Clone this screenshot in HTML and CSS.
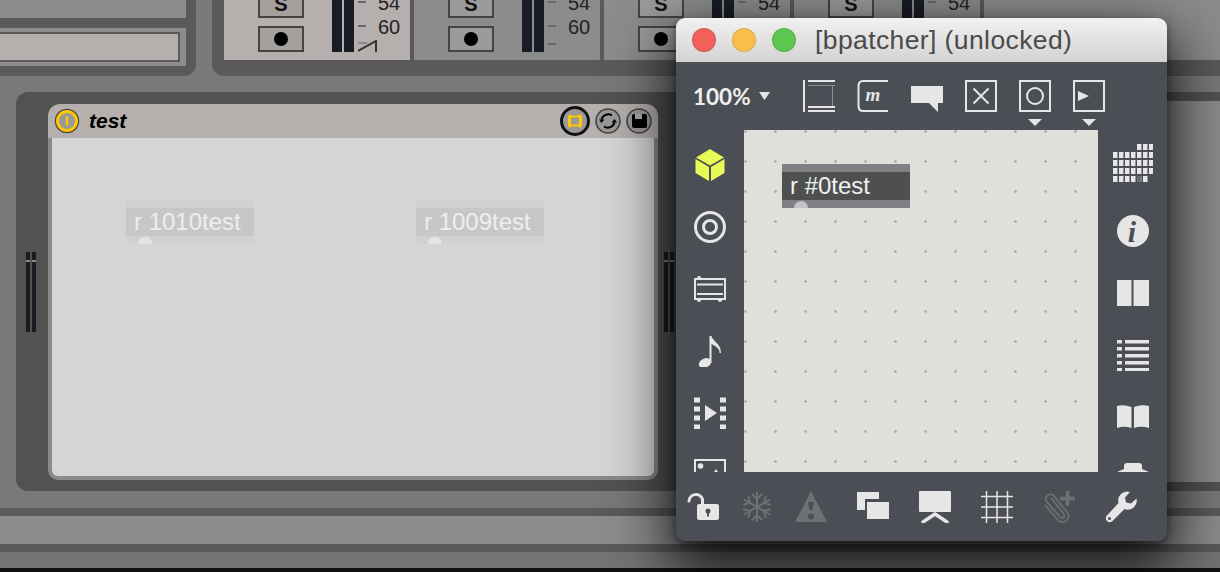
FILE: index.html
```html
<html>
<head>
	<link rel="stylesheet" href="styles.css">
	<title>bpatcher</title>
</head>
<body>
	<div id="toprow">
		<div id="browser">
			<div class="browserband"></div>
			<div class="browserfield"><div class="fieldbox"></div></div>
		</div>
		<div id="mixer">
			<div class="channel selected">
				<div class="buttons">
					<div class="chanbtn solo">S</div>
					<div class="chanbtn"><span class="recdot"></span></div>
				</div>
				<div class="meter"><i></i><i></i></div>
				<div class="scale">
					<div class="scalerow"><b></b><span>54</span></div>
					<div class="scalerow"><b></b><span>60</span></div>
					<div class="scalerow short">
						<svg width="20" height="12" viewBox="0 0 20 12"><path class="rampgrey" d="M0 3H9"/><path class="ramp" d="M0 11L18 1V12"/></svg>
					</div>
				</div>
			</div>
			<div class="channel">
				<div class="buttons">
					<div class="chanbtn solo">S</div>
					<div class="chanbtn"><span class="recdot"></span></div>
				</div>
				<div class="meter"><i></i><i></i></div>
				<div class="scale">
					<div class="scalerow"><b></b><span>54</span></div>
					<div class="scalerow"><b></b><span>60</span></div>
					<div class="scalerow short"><b></b></div>
				</div>
			</div>
			<div class="channel">
				<div class="buttons">
					<div class="chanbtn solo">S</div>
					<div class="chanbtn"><span class="recdot"></span></div>
				</div>
				<div class="meter"><i></i><i></i></div>
				<div class="scale">
					<div class="scalerow"><b></b><span>54</span></div>
					<div class="scalerow"><b></b><span>60</span></div>
					<div class="scalerow short"><b></b></div>
				</div>
			</div>
			<div class="channel">
				<div class="buttons">
					<div class="chanbtn solo">S</div>
					<div class="chanbtn"><span class="recdot"></span></div>
				</div>
				<div class="meter"><i></i><i></i></div>
				<div class="scale">
					<div class="scalerow"><b></b><span>54</span></div>
					<div class="scalerow"><b></b><span>60</span></div>
					<div class="scalerow short"><b></b></div>
				</div>
			</div>
			<div class="channel last"></div>
		</div>
	</div>

	<div id="devicerack">
		<div class="sidemeter"><i></i><i></i></div>
		<div id="device">
			<div id="devicetitle">
				<svg width="26" height="26" viewBox="0 0 26 26">
					<circle cx="13" cy="13" r="12.2" fill="#454545"/>
					<circle cx="13" cy="13" r="9.5" fill="#999" stroke="#ffc800" stroke-width="3"/>
					<rect x="11.8" y="8.5" width="2.4" height="9" fill="#ffc800"/>
				</svg>
				<span id="devicename">test</span>
				<div id="devicebtns">
					<svg width="30" height="30" viewBox="0 0 30 30">
						<circle cx="15" cy="15" r="13.5" fill="#999" stroke="#111" stroke-width="3"/>
						<rect x="9" y="10.500" width="12" height="9" fill="none" stroke="#ffc800" stroke-width="2"/>
						<path d="M10 8.500V21.500M20 8.500V21.500" fill="none" stroke="#ffc800" stroke-width="2"/>
					</svg>
					<svg width="26" height="26" viewBox="0 0 26 26">
						<circle cx="13" cy="13" r="12" fill="#999" stroke="#444" stroke-width="1.6"/>
						<path d="M6.500 11.500A7 7 0 0 1 17 7.500M19.500 14.500A7 7 0 0 1 9 18.500" fill="none" stroke="#000" stroke-width="2"/>
						<path d="M4 11.500H9.500L6.500 15ZM22 14.500H16.500L19.500 11Z" fill="#000"/>
					</svg>
					<svg width="26" height="26" viewBox="0 0 26 26">
						<circle cx="13" cy="13" r="12" fill="#999" stroke="#444" stroke-width="1.6"/>
						<rect x="6" y="6" width="15" height="14" rx="2" fill="#000"/>
						<rect x="9" y="6" width="7" height="5" fill="#aaa"/>
					</svg>
				</div>
			</div>
			<div id="devicebody">
				<div class="robject ghost first">
					<div class="objtext">r 1010test</div>
					<span class="inlet"></span>
				</div>
				<div class="robject ghost second">
					<div class="objtext">r 1009test</div>
					<span class="inlet"></span>
				</div>
			</div>
		</div>
		<div class="sidemeter"><i></i><i></i></div>
		<div id="nextdevice"></div>
	</div>

	<div id="strips">
		<div class="strip dark"></div>
		<div class="strip pale"></div>
		<div class="strip dark"></div>
		<div class="strip mid"></div>
		<div class="strip black"></div>
	</div>

	<div id="bpwindow">
		<div id="bptitle">
			<span class="lamp red"></span>
			<span class="lamp yellow"></span>
			<span class="lamp green"></span>
			<span id="bpname">[bpatcher] (unlocked)</span>
		</div>

		<div id="bptoolbar">
			<span id="zoomlabel">100%</span>
			<svg id="zoomarrow" width="11" height="8" viewBox="0 0 11 8"><path class="ico" d="M0 0H11L5.500 8Z"/></svg>
			<div id="tools">
				<svg width="32" height="32" viewBox="0 0 32 32">
					<path class="ico" d="M0 0H2V32H0ZM5 0H32V2H5ZM5 26H32V28H5ZM5 30H32V32H5Z"/>
					<path class="ico faint" d="M5 5H32V6H5ZM29 6H30V26H29Z"/>
				</svg>
				<svg width="32" height="32" viewBox="0 0 32 32">
					<path class="line" d="M31 1H6Q1.500 1 1.500 6V26Q1.500 31 6 31H31"/>
					<text class="micon" x="16" y="21" text-anchor="middle">m</text>
				</svg>
				<svg width="32" height="32" viewBox="0 0 32 32"><path class="ico" d="M0 6H32V23H27V32L18 23H0Z"/></svg>
				<svg width="32" height="32" viewBox="0 0 32 32">
					<rect class="line" x="1" y="1" width="30" height="30"/>
					<path class="line" d="M8.500 8.500L23.500 23.500M23.500 8.500L8.500 23.500"/>
				</svg>
				<svg width="32" height="46" viewBox="0 0 32 46">
					<rect class="line" x="1" y="1" width="30" height="30"/>
					<circle class="line" cx="16" cy="16" r="8"/>
					<path class="ico" d="M9 39H23L16 46Z"/>
				</svg>
				<svg width="32" height="46" viewBox="0 0 32 46">
					<rect class="line" x="1" y="1" width="30" height="30"/>
					<path class="ico" d="M5 11L16 16L5 21Z"/>
					<path class="ico" d="M9 39H23L16 46Z"/>
				</svg>
			</div>
		</div>

		<div id="bpmiddle">
			<div id="leftpalette" class="palette">
				<svg width="32" height="32" viewBox="0 0 32 32">
					<path class="cube" d="M16 0L30 8.500L16 16.500L2 8.500ZM1.500 10L15 18V32L1.500 24ZM30.500 10L17 18V32L30.500 24Z"/>
				</svg>
				<svg width="32" height="32" viewBox="0 0 32 32">
					<circle class="thick" cx="16" cy="16" r="14.500"/>
					<circle class="thick" cx="16" cy="16" r="6.500"/>
				</svg>
				<svg width="32" height="32" viewBox="0 0 32 32">
					<rect class="line" x="1" y="6" width="30" height="20"/>
					<path class="line" d="M3 11.500H29M3 21H29"/>
					<circle class="ico" cx="5" cy="5" r="2"/><circle class="ico" cx="5" cy="27" r="2"/><circle class="ico" cx="26" cy="27" r="2"/>
				</svg>
				<svg width="32" height="32" viewBox="0 0 32 32">
					<ellipse class="ico" cx="11" cy="28" rx="6.500" ry="4.500" transform="rotate(-25 11 28)"/>
					<path class="ico" d="M15.500 1H17.500C18 6 27 8 27 18L25.500 18C26 13 21 11 17.500 9V28H15.500Z"/>
				</svg>
				<svg width="32" height="32" viewBox="0 0 32 32">
					<path class="ico" d="M0 .5H6V5.500H0ZM0 9.500H6V14.500H0ZM0 18.500H6V23.500H0ZM0 27.500H6V32.500H0ZM26 .5H32V5.500H26ZM26 9.500H32V14.500H26ZM26 18.500H32V23.500H26ZM26 27.500H32V32.500H26ZM11 8L23 16L11 24Z"/>
				</svg>
				<svg width="32" height="32" viewBox="0 0 32 32">
					<rect class="line" x="1" y="1" width="30" height="30"/>
					<circle class="ico" cx="6.500" cy="7" r="2.800"/>
					<path class="ico" d="M22 10L30 22H14Z"/>
				</svg>
			</div>

			<div id="canvas">
				<div class="robject dark">
					<div class="objtext">r #0test</div>
					<span class="inlet"></span>
				</div>
			</div>

			<div id="rightpalette" class="palette">
				<svg id="objgrid" width="40" height="38" viewBox="0 0 40 38">
					<path class="dots" d="M24 3H42M0 11H42M0 19H42M0 27H42M0 35H36"/>
					<rect class="dim" x="24" y="32" width="4.500" height="6"/>
				</svg>
				<svg width="32" height="32" viewBox="0 0 32 32">
					<circle class="ico" cx="16" cy="16" r="16"/>
					<text class="infoi" x="15" y="27" text-anchor="middle">i</text>
				</svg>
				<svg width="32" height="32" viewBox="0 0 32 32"><path class="ico" d="M0 3H14.500V29H0ZM16.500 3H32V29H16.500Z"/></svg>
				<svg width="32" height="32" viewBox="0 0 32 32">
					<path class="ico" d="M0 1H5V4.500H0ZM8 1H32V4.500H8ZM0 8H5V11.500H0ZM8 8H32V11.500H8ZM0 15H5V18.500H0ZM8 15H32V18.500H8ZM0 22H5V25.500H0ZM8 22H32V25.500H8ZM0 29H5V32H0ZM8 29H32V32H8Z"/>
				</svg>
				<svg width="32" height="32" viewBox="0 0 32 32">
					<path class="ico" d="M0 5Q7 3 14.500 6V27Q7 24.500 0 27ZM32 5Q24 3 17 6V27Q24 24.500 32 27Z"/>
				</svg>
				<svg width="32" height="32" viewBox="0 0 32 32"><path class="ico" d="M7 6V3Q7 0 10 0H22Q25 0 25 3V6L32 9H0Z"/></svg>
			</div>
		</div>

		<div id="bpbottom">
			<svg width="32" height="32" viewBox="0 0 32 32">
				<path class="line round" d="M2 10A7 7 0 0 1 15.500 8V14"/>
				<rect class="ico" x="10" y="13" width="22" height="16" rx="2"/>
				<circle class="hole" cx="21" cy="20" r="2.500"/><rect class="hole" x="20" y="20" width="2" height="5.500"/>
			</svg>
			<svg width="32" height="32" viewBox="0 0 32 32">
				<path class="dimline" d="M16 1V31M11 3L16 8L21 3M11 29L16 24L21 29"/>
				<path class="dimline" transform="rotate(60 16 16)" d="M16 1V31M11 3L16 8L21 3M11 29L16 24L21 29"/>
				<path class="dimline" transform="rotate(120 16 16)" d="M16 1V31M11 3L16 8L21 3M11 29L16 24L21 29"/>
			</svg>
			<svg width="32" height="32" viewBox="0 0 32 32">
				<path class="dim" d="M16 0L32 31H0Z"/>
				<path class="hole" d="M13 11H19L17.500 19H14.500Z"/><circle class="hole" cx="16" cy="25.500" r="3"/>
			</svg>
			<svg width="32" height="32" viewBox="0 0 32 32"><path class="ico" d="M0 1H22V8H8V19H0ZM10 11H32V28H10Z"/></svg>
			<svg width="32" height="32" viewBox="0 0 32 32">
				<rect class="ico" x="0" y="0" width="32" height="21" rx="1"/>
				<path class="line round thicker" d="M16 23L4 31M16 23L28 31"/>
			</svg>
			<svg width="32" height="32" viewBox="0 0 32 32">
				<path class="line thin" d="M5.500 0V32M16 0V32M26.500 0V32M0 5.500H32M0 16H32M0 26.500H32"/>
			</svg>
			<svg width="32" height="32" viewBox="0 0 32 32">
				<path class="dimline clip" d="M8 7L21 23A2.500 2.500 0 0 1 17 26L4 11A4.500 4.500 0 0 1 11 5L24 21A6 6 0 0 1 15 29L2 14"/>
				<path class="dimline plus" d="M24.500 0V15M17 7.500H32"/>
			</svg>
			<svg width="32" height="32" viewBox="0 0 32 32">
				<path class="ico" d="M31.500 7.500L26 12.500L21 11.500L20 6.500L25 1A9 9 0 0 0 13.500 12L1.500 25A4 4 0 0 0 7 30.500L19.500 18A9 9 0 0 0 31.500 7.500Z"/>
				<circle class="hole" cx="4.500" cy="27.500" r="1.500"/>
			</svg>
		</div>
	</div>
</body>
</html>
```

FILE: styles.css
```css
html,body{
	margin: 0;
	padding: 0;
}
body{
	position: relative;
	width: 1220px;
	height: 572px;
	overflow: hidden;
	background-color: #797979;
	font-family: "Liberation Sans", Arial, sans-serif;
}
svg{
	display: block;
	flex: none;
	overflow: hidden;
}

/* top row: browser + mixer */
#toprow{
	display: flex;
	gap: 16px;
	height: 76px;
}
#browser{
	width: 186px;
	padding-right: 10px;
	background-color: #5a5a5a;
	border-radius: 0 0 12px 0;
}
.browserband{
	height: 18px;
	background-color: #8c8c8c;
}
.browserfield{
	margin-top: 10px;
	padding: 4px 6px 4px 0;
	height: 30px;
	background-color: #8c8c8c;
}
.fieldbox{
	height: 26px;
	background-color: #b5b0ae;
	border: 2px solid #5a5a5a;
	border-left: 0;
}
#mixer{
	flex: 1;
	display: flex;
	gap: 4px;
	height: 76px;
	padding-left: 12px;
	background-color: #5a5a5a;
	border-radius: 0 0 0 12px;
}
.channel{
	display: flex;
	align-items: flex-end;
	width: 186px;
	height: 52px;
	padding-top: 0;
	padding-bottom: 8px;
	background-color: #8c8c8c;
	overflow: hidden;
}
.channel.selected{
	background-color: #b5b0ae;
}
.channel.last{
	flex: 1;
	height: 60px;
	padding: 0;
}
.buttons{
	display: flex;
	flex-direction: column;
	gap: 8px;
	margin-left: 34px;
}
.chanbtn{
	display: flex;
	align-items: center;
	justify-content: center;
	box-sizing: border-box;
	width: 46px;
	height: 26px;
	border: 2px solid #444;
	background-color: #9b9b9b;
}
.chanbtn.solo{
	height: 28px;
	font-size: 20px;
	font-weight: bold;
	color: #111;
}
.selected .chanbtn{
	background-color: #a3a09e;
}
.recdot{
	width: 14px;
	height: 14px;
	border-radius: 50%;
	background-color: #000;
}
.meter{
	display: flex;
	gap: 2px;
	margin-left: 28px;
	height: 62px;
}
.meter i{
	width: 10px;
	background-color: #181c24;
}
.scale{
	display: flex;
	flex-direction: column;
	margin-left: 4px;
}
.scalerow{
	display: flex;
	align-items: center;
	gap: 12px;
	height: 24px;
	font-size: 20px;
	color: #222;
}
.scalerow span{
	margin-top: 2px;
}
.scalerow.short{
	height: 14px;
	align-items: flex-end;
}
.scalerow b{
	width: 8px;
	height: 2px;
	background-color: #6a6a6a;
}
.scalerow.short b{
	margin-bottom: 7px;
}
.rampgrey{
	stroke: #8a8a8a;
	stroke-width: 2;
	fill: none;
}
.ramp{
	stroke: #333;
	stroke-width: 2;
	fill: none;
}

/* device rack */
#devicerack{
	display: flex;
	align-items: flex-start;
	margin: 16px 0 0 16px;
	height: 387px;
	padding-top: 12px;
	background-color: #525252;
	border-radius: 12px 0 0 12px;
}
.sidemeter{
	display: flex;
	gap: 2px;
	margin: 148px 0 0 10px;
	height: 80px;
}
.sidemeter i{
	width: 4px;
	background: linear-gradient(#181c24 8px, #8a8a8a 8px, #8a8a8a 10px, #181c24 10px);
}
#device{
	margin-left: 12px;
	width: 610px;
}
.sidemeter + #device + .sidemeter{
	margin-left: 6px;
}
#devicetitle{
	display: flex;
	align-items: center;
	height: 34px;
	padding: 0 6px;
	background-color: #b5b0ae;
	border-radius: 12px 12px 0 0;
}
#devicename{
	margin-left: 9px;
	font-size: 21px;
	font-weight: bold;
	font-style: italic;
	color: #000;
}
#devicebtns{
	display: flex;
	align-items: center;
	gap: 5px;
	margin-left: auto;
}
#devicebody{
	position: relative;
	height: 338px;
	background-color: #d5d5d5;
	border: 4px solid #8a8a8a;
	border-top: 0;
	border-radius: 0 0 10px 10px;
}
#nextdevice{
	flex: 1;
	margin: -3px 0 0 2px;
	height: 381px;
	background-color: #8c8c8c;
}

/* patcher objects, free canvas */
.robject{
	position: absolute;
	box-sizing: border-box;
	width: 128px;
	height: 44px;
	padding: 8px 0;
	overflow: hidden;
}
.objtext{
	height: 28px;
	padding-left: 8px;
	font-size: 24px;
	line-height: 28px;
}
.inlet{
	position: absolute;
	left: 12px;
	top: 37px;
	width: 14px;
	height: 14px;
	border-radius: 50%;
}
.robject.ghost{
	top: 62px;
	background-color: #d0d2d2;
}
.robject.ghost.first{
	left: 74px;
}
.robject.ghost.second{
	left: 364px;
}
.ghost .objtext{
	background-color: #c6c8c6;
	color: #eeeeee;
}
.ghost .inlet{
	background-color: #e2e4e6;
}
.robject.dark{
	left: 38px;
	top: 34px;
	background-color: #7f8083;
}
.dark .objtext{
	background-color: #4e5050;
	color: #f0f0f0;
}
.dark .inlet{
	background-color: #c2c3c7;
}

/* bottom strips */
#strips{
	margin-top: 17px;
}
.strip.dark{
	height: 8px;
	background-color: #5a5a5a;
}
.strip.pale{
	height: 28px;
	background-color: #8c8c8c;
}
.strip.mid{
	height: 16px;
	background-color: #747474;
}
.strip.black{
	height: 4px;
	background-color: #111;
}

/* floating window */
#bpwindow{
	position: absolute;
	left: 676px;
	top: 18px;
	width: 491px;
	height: 523px;
	display: flex;
	flex-direction: column;
	background-color: #4b4e54;
	border-radius: 9px;
	box-shadow: 0 3px 8px rgba(0,0,0,.45), 0 24px 60px 8px rgba(0,0,0,.8);
	overflow: hidden;
}
#bptitle{
	display: flex;
	align-items: center;
	gap: 16px;
	height: 44px;
	padding-left: 16px;
	background: linear-gradient(#f1f1f1, #d3d3d3);
	flex: none;
}
.lamp{
	box-sizing: border-box;
	width: 24px;
	height: 24px;
	border-radius: 50%;
	border: 1px solid rgba(0,0,0,.1);
}
.lamp.red{
	background-color: #f1605a;
}
.lamp.yellow{
	background-color: #f9bd4c;
}
.lamp.green{
	background-color: #5cc750;
}
#bpname{
	margin-left: 3px;
	font-size: 26.5px;
	color: #4a4a4a;
	letter-spacing: .4px;
}
#bptoolbar{
	display: flex;
	align-items: center;
	height: 68px;
	padding-left: 17px;
	flex: none;
}
#zoomlabel{
	width: 55px;
	font-family: Lato, sans-serif;
	font-size: 22.5px;
	font-weight: bold;
	color: #eeeeee;
}
#zoomarrow{
	margin-left: 11px;
}
#tools{
	display: flex;
	align-items: flex-start;
	gap: 22px;
	height: 46px;
	margin: 18px 0 0 33px;
	align-self: flex-start;
}
#bpmiddle{
	display: flex;
	height: 342px;
	flex: none;
}
.palette{
	display: flex;
	flex-direction: column;
	align-items: center;
	gap: 30px;
	overflow: hidden;
	height: 342px;
	box-sizing: border-box;
}
#leftpalette{
	width: 68px;
	padding-top: 19px;
}
#rightpalette{
	width: 69px;
	padding-top: 14px;
}
#objgrid{
	margin-bottom: 3px;
}
#canvas{
	position: relative;
	width: 354px;
	background-color: #dfe0da;
	background-image: radial-gradient(circle at 1.5px 1.5px, #aeafaa 1px, transparent 1.6px);
	background-size: 30px 30px;
}
#bpbottom{
	display: flex;
	gap: 30px;
	padding: 19px 0 0 11px;
}
#bpbottom svg:nth-child(-n+2){
	margin-right: -8px;
}

/* icon paints */
.ico{
	fill: #e6e6e6;
}
.ico.faint{
	fill: #8d8f93;
}
.line{
	fill: none;
	stroke: #e6e6e6;
	stroke-width: 2;
}
.line.thin{
	stroke-width: 1.5;
}
.line.round{
	stroke-width: 3;
	stroke-linecap: round;
}
.line.thicker{
	stroke-width: 3.5;
}
.thick{
	fill: none;
	stroke: #e6e6e6;
	stroke-width: 3;
}
.cube{
	fill: #e6fb58;
}
.micon{
	font-family: "Liberation Serif", serif;
	font-size: 19px;
	font-style: italic;
	font-weight: bold;
	fill: #e6e6e6;
}
.infoi{
	font-family: "Liberation Serif", serif;
	font-size: 30px;
	font-style: italic;
	font-weight: bold;
	fill: #4b4e54;
}
.dots{
	fill: none;
	stroke: #e6e6e6;
	stroke-width: 6;
	stroke-dasharray: 4.5 1.5;
}
.dim{
	fill: #6d7075;
}
.dimline{
	fill: none;
	stroke: #6d7075;
	stroke-width: 2;
}
.dimline.clip{
	stroke-width: 1.8;
}
.dimline.plus{
	stroke-width: 3.5;
}
.hole{
	fill: #4b4e54;
}
```
